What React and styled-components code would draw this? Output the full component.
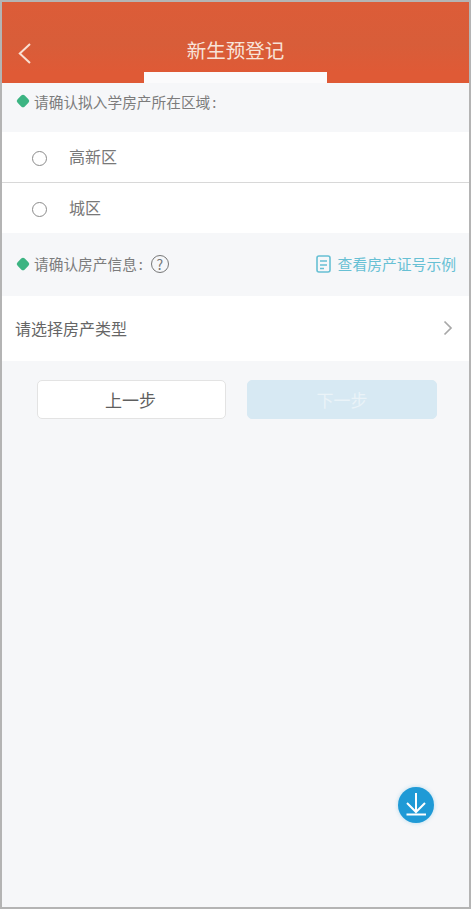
import React from 'react';
import styled, { createGlobalStyle } from 'styled-components';

const Global = createGlobalStyle`
  html, body { margin: 0; padding: 0; background: #f6f7f9; }
  * { box-sizing: border-box; }
  body { font-family: "Noto Sans CJK SC", "Liberation Sans", sans-serif; }
`;
const Frame = styled.div`
  width: 471px; height: 909px; display: flex; flex-direction: column; position: relative;
  background: #f6f7f9; border: 2px solid #b4b4b4; overflow: hidden;
`;
const Header = styled.header`
  height: 70px; flex: none; background: linear-gradient(#dc5c38, #d85d39 60%, #df5a36); color: #f8e3d8;
  display: flex; align-items: flex-end; justify-content: center; padding-bottom: 8px; position: relative;
`;
const Title = styled.h1`
  margin: 0; font-size: 19.5px; line-height: 28px; font-weight: 400;
`;
const Back = styled.button`
  position: absolute; left: 15px; bottom: 7px; padding: 0; border: 0; background: none; display: flex; width: 16px; height: 24px;
`;
const TabEdge = styled.div`
  height: 11px; flex: none; display: grid; grid-template-columns: 142px 183px 1fr;
`;
const EdgePart = styled.div`
  background: ${p => (p.$open ? '#fbfbfc' : '#df5a36')};
`;
const SectionHead = styled.div`
  height: ${p => p.$h}px; flex: none; display: flex; align-items: center; padding: 0 13px 2px 15px; color: #7c7c7c; font-size: 14.7px;
`;
const Diamond = styled.i`
  width: 12px; height: 12px; flex: none; background: #3cb482; border-radius: 3px; transform: rotate(45deg) scale(.85); margin-right: 5px;
`;
const Colon = styled.span`
  margin-left: 2px;
`;
const Help = styled.span`
  width: 18px; height: 18px; margin-left: 8px; border-radius: 50%; border: 1px solid #777; color: #777; font-size: 14px; line-height: 1; display: flex; align-items: center; justify-content: center;
`;
const Sample = styled.a`
  margin-left: auto; display: flex; align-items: center; color: #67c0d4; font-size: 14.8px; gap: 7px;
`;
const OptionList = styled.div`
  background: #fff; flex: none;
`;
const Option = styled.label`
  height: ${p => p.$h}px; display: flex; align-items: center; padding: 0 0 2px 30px; color: #787878; font-size: 16px;
  & + & { border-top: 1px solid #d8d8d8; }
`;
const Radio = styled.span`
  width: 15px; height: 15px; border-radius: 50%; border: 1px solid #8b8b8b; margin-right: 22px; background: #fff; position: relative; top: 2px;
`;
const Select = styled.div`
  height: 65px; flex: none; background: #fff; display: flex; align-items: center; justify-content: space-between; padding: 0 16px 2px 13px; color: #666; font-size: 16px;
`;
const Buttons = styled.div`
  display: grid; grid-template-columns: 189px 190px; gap: 21px; padding: 19px 0 0 35px; flex: none;
`;
const Btn = styled.button`
  height: 39px; padding: 0 ${p => (p.$primary ? 0 : 2)}px 0 0; border-radius: 5px; font: inherit; font-size: 17px;
  border: 1px solid ${p => (p.$primary ? '#d7e9f3' : '#e3e3e3')};
  background: ${p => (p.$primary ? '#d7e9f3' : '#fff')};
  color: ${p => (p.$primary ? '#eaf3f8' : '#5f5f5f')};
`;
const Fab = styled.button`
  position: absolute; left: 396px; top: 785px; width: 36px; height: 36px; border-radius: 50%; border: 0; padding: 0;
  background: #1f9ad6; box-shadow: 0 0 4px rgba(31,154,214,.3); display: flex; align-items: center; justify-content: center;
`;

export default function App() {
  return (
    <>
      <Global />
      <Frame>
        <Header>
          <Back aria-label="返回">
            <svg width="16" height="24" viewBox="0 0 16 24" fill="none"><path d="M13 3 L2.800 12.500 L13 22" stroke="#f9e0d3" strokeWidth="2" /></svg>
          </Back>
          <Title>新生预登记</Title>
        </Header>
        <TabEdge>
          <EdgePart />
          <EdgePart $open />
          <EdgePart />
        </TabEdge>
        <SectionHead $h={38}>
          <Diamond />请确认拟入学房产所在区域<Colon>:</Colon>
        </SectionHead>
        <div style={{ height: 11, flex: 'none' }} />
        <OptionList>
          <Option $h={50}><Radio />高新区</Option>
          <Option $h={51}><Radio />城区</Option>
        </OptionList>
        <SectionHead $h={63}>
          <Diamond />请确认房产信息<Colon>:</Colon><Help>?</Help>
          <Sample>
            <svg width="15" height="18" viewBox="0 0 15 18" fill="none" stroke="#67c0d4" strokeWidth="1.6"><rect x="1" y="1" width="13" height="16" rx="2" /><path d="M4 6h7M4 10h7M4 13.500h4" strokeWidth="1.300" /></svg>
            查看房产证号示例
          </Sample>
        </SectionHead>
        <Select>
          请选择房产类型
          <svg width="10" height="16" viewBox="0 0 10 16" fill="none"><path d="M1.500 1.500 L8 8 L1.500 14.500" stroke="#a8a8a8" strokeWidth="1.700" /></svg>
        </Select>
        <Buttons>
          <Btn>上一步</Btn>
          <Btn $primary>下一步</Btn>
        </Buttons>
        <Fab aria-label="下载">
          <svg width="36" height="36" viewBox="0 0 36 36" fill="none" stroke="#fff" strokeWidth="2"><path d="M18 6v19M9 16l9 9 9-9M8.500 27.500h19.500" /></svg>
        </Fab>
      </Frame>
    </>
  );
}
